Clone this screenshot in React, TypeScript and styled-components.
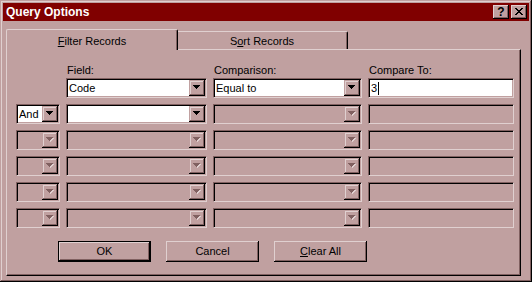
import React from "react";
import styled, { createGlobalStyle } from "styled-components";

const FACE = "#C0A0A0";
const HI = "#E0D0D0";
const SH = "#806060";
const DK = "#000000";

const Global = createGlobalStyle`
  html, body { margin: 0; padding: 0; background: ${FACE}; }
  body { font-family: "Liberation Sans", Arial, sans-serif; font-size: 11px; color: #000; }
`;

const Window = styled.div`
  box-sizing: border-box;
  width: 532px;
  height: 282px;
  background: ${FACE};
  padding: 3px;
  box-shadow: inset -1px -1px ${DK}, inset 1px 1px ${FACE}, inset -2px -2px ${SH}, inset 2px 2px ${HI};
  display: flex;
  flex-direction: column;
`;

const TitleBar = styled.div`
  height: 18px;
  background: #800000;
  display: flex;
  align-items: center;
  padding: 0 2px 0 3px;
  gap: 2px;
`;

const Title = styled.span`
  flex: 1;
  color: #fff;
  font-weight: bold;
  font-size: 12px;
  line-height: 18px;
`;

const TitleButton = styled.div`
  box-sizing: border-box;
  width: 16px;
  height: 14px;
  background: ${FACE};
  box-shadow: inset -1px -1px ${DK}, inset 1px 1px ${HI}, inset -2px -2px ${SH}, inset 2px 2px ${FACE};
  display: flex;
  align-items: center;
  justify-content: center;
  font-weight: bold;
  font-size: 12px;
  line-height: 14px;
  padding-bottom: 1px;
`;

const Body = styled.div`
  flex: 1;
  display: flex;
  flex-direction: column;
  padding: 8px 8px 3px 3px;
`;

const TabRow = styled.div`
  display: flex;
  align-items: flex-end;
  height: 20px;
  position: relative;
  z-index: 1;
`;

const Tab = styled.div<{ $active?: boolean }>`
  box-sizing: border-box;
  width: 172px;
  height: ${(p) => (p.$active ? 21 : 18)}px;
  margin-bottom: ${(p) => (p.$active ? -1 : 0)}px;
  margin-left: ${(p) => (p.$active ? 0 : -2)}px;
  background: ${FACE};
  border-top: 1px solid ${HI};
  border-left: 1px solid ${HI};
  border-right: 1px solid ${DK};
  box-shadow: inset -1px 0 ${SH};
  border-top-left-radius: 2px;
  border-top-right-radius: 2px;
  display: flex;
  justify-content: center;
  align-items: flex-start;
  padding-top: ${(p) => (p.$active ? 5 : 3)}px;
  line-height: 13px;
  position: relative;
  z-index: ${(p) => (p.$active ? 2 : 1)};
`;

const Panel = styled.div`
  flex: 1;
  box-sizing: border-box;
  border-top: 1px solid ${HI};
  border-left: 1px solid ${HI};
  border-right: 1px solid ${DK};
  border-bottom: 1px solid ${DK};
  box-shadow: inset -1px -1px ${SH};
  padding: 14px 0 0 9px;
  display: flex;
  flex-direction: column;
`;

const GridRow = styled.div`
  display: grid;
  grid-template-columns: 44px 141px 149px 146px;
  column-gap: 6px;
`;

const LabelRow = styled(GridRow)`
  height: 13px;
  line-height: 13px;
  margin-bottom: 1px;
`;

const Label = styled.span`
  padding-left: 1px;
`;

const Rows = styled.div`
  display: flex;
  flex-direction: column;
  gap: 6px;
`;

const Sunken = styled.div<{ $disabled?: boolean }>`
  box-sizing: border-box;
  height: 20px;
  border-top: 1px solid ${SH};
  border-left: 1px solid ${SH};
  border-right: 1px solid ${HI};
  border-bottom: 1px solid ${HI};
  box-shadow: inset 1px 1px ${DK}, inset -1px -1px ${FACE};
  background: ${(p) => (p.$disabled ? FACE : "#fff")};
  display: flex;
  align-items: center;
  padding: 1px;
`;

const Value = styled.span`
  flex: 1;
  padding-left: 1px;
  line-height: 13px;
  white-space: nowrap;
  display: flex;
  align-items: center;
`;

const Caret = styled.span`
  display: inline-block;
  width: 1px;
  height: 13px;
  background: #000;
  margin-left: 1px;
`;

const ArrowButton = styled.div`
  box-sizing: border-box;
  width: 16px;
  height: 16px;
  background: ${FACE};
  box-shadow: inset -1px -1px ${DK}, inset 1px 1px ${FACE}, inset -2px -2px ${SH}, inset 2px 2px ${HI};
  display: flex;
  align-items: center;
  justify-content: center;
  padding: 0 1px 1px 0;
`;

const ButtonRow = styled.div`
  display: flex;
  gap: 15px;
  margin: 13px 0 0 42px;
`;

const Button = styled.div<{ $default?: boolean }>`
  box-sizing: border-box;
  width: 93px;
  height: 21px;
  background: ${FACE};
  border: ${(p) => (p.$default ? `1px solid ${DK}` : "none")};
  box-shadow: inset -1px -1px ${DK}, inset 1px 1px ${HI}, inset -2px -2px ${SH}, inset 2px 2px ${FACE};
  display: flex;
  align-items: center;
  justify-content: center;
  line-height: 13px;
`;

const Arrow = ({ disabled }: { disabled?: boolean }) => {
  const tri = "M0 0h7v1H0zM1 1h5v1H1zM2 2h3v1H2zM3 3h1v1H3z";
  return (
    <svg width="8" height="5" viewBox="0 0 8 5" shapeRendering="crispEdges">
      {disabled ? (
        <>
          <path d={tri} fill={HI} transform="translate(1 1)" />
          <path d={tri} fill={SH} />
        </>
      ) : (
        <path d={tri} fill="#000" />
      )}
    </svg>
  );
};

const CloseGlyph = () => (
  <svg width="8" height="7" viewBox="0 0 8 7" shapeRendering="crispEdges">
    <path
      d="M0 0h2v1H0zM6 0h2v1H6zM1 1h2v1H1zM5 1h2v1H5zM2 2h4v1H2zM3 3h2v1H3zM2 4h4v1H2zM1 5h2v1H1zM5 5h2v1H5zM0 6h2v1H0zM6 6h2v1H6z"
      fill="#000"
    />
  </svg>
);

const Combo = ({ value, disabled }: { value?: string; disabled?: boolean }) => (
  <Sunken $disabled={disabled}>
    <Value>{value}</Value>
    <ArrowButton>
      <Arrow disabled={disabled} />
    </ArrowButton>
  </Sunken>
);

const TextBox = ({ value, disabled, caret }: { value?: string; disabled?: boolean; caret?: boolean }) => (
  <Sunken $disabled={disabled}>
    <Value>
      {value}
      {caret && <Caret />}
    </Value>
  </Sunken>
);

type RowData = {
  join: "none" | "on" | "off";
  joinValue?: string;
  field: string | null;
  comp: string | null;
  to: string | null;
};

const rows: RowData[] = [
  { join: "none", field: "Code", comp: "Equal to", to: "3" },
  { join: "on", joinValue: "And", field: "", comp: null, to: null },
  { join: "off", field: null, comp: null, to: null },
  { join: "off", field: null, comp: null, to: null },
  { join: "off", field: null, comp: null, to: null },
  { join: "off", field: null, comp: null, to: null },
];

export default function App() {
  return (
    <>
      <Global />
      <Window>
        <TitleBar>
          <Title>Query Options</Title>
          <TitleButton>?</TitleButton>
          <TitleButton>
            <CloseGlyph />
          </TitleButton>
        </TitleBar>
        <Body>
          <TabRow>
            <Tab $active>
              <span>
                <u>F</u>ilter Records
              </span>
            </Tab>
            <Tab>
              <span>
                S<u>o</u>rt Records
              </span>
            </Tab>
          </TabRow>
          <Panel>
            <LabelRow>
              <span />
              <Label>Field:</Label>
              <Label>Comparison:</Label>
              <Label>Compare To:</Label>
            </LabelRow>
            <Rows>
              {rows.map((r, i) => (
                <GridRow key={i}>
                  {r.join === "none" ? (
                    <span />
                  ) : (
                    <Combo value={r.joinValue} disabled={r.join === "off"} />
                  )}
                  <Combo value={r.field ?? ""} disabled={r.field === null} />
                  <Combo value={r.comp ?? ""} disabled={r.comp === null} />
                  <TextBox value={r.to ?? ""} disabled={r.to === null} caret={i === 0} />
                </GridRow>
              ))}
            </Rows>
            <ButtonRow>
              <Button $default>OK</Button>
              <Button>Cancel</Button>
              <Button>
                <span>
                  <u>C</u>lear All
                </span>
              </Button>
            </ButtonRow>
          </Panel>
        </Body>
      </Window>
    </>
  );
}
